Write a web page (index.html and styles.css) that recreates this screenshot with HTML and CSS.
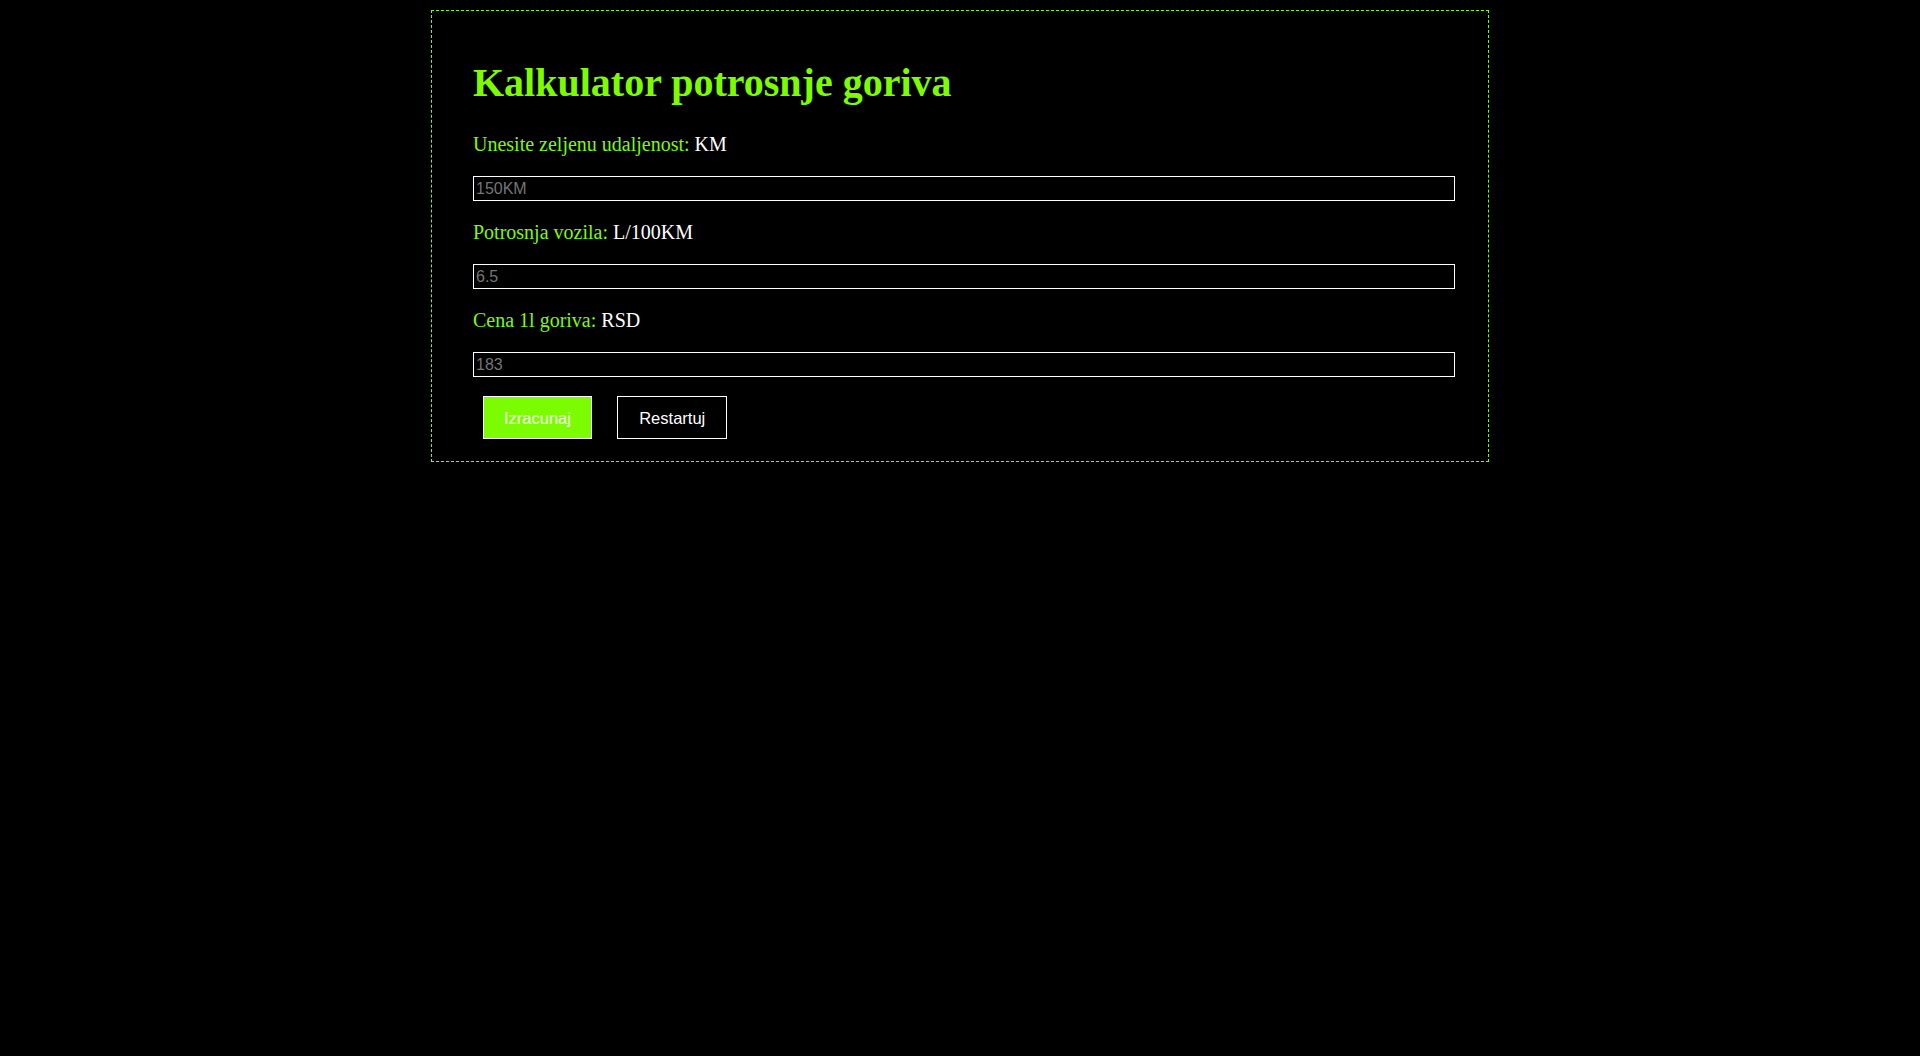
FILE: index.html
```html
<!DOCTYPE html>
<html lang="sr">
<head>
<meta charset="utf-8">
<title>Kalkulator potrosnje goriva</title>
<link rel="stylesheet" href="styles.css">
</head>
<body>
<div class="container">
  <h1 class="title">Kalkulator potrosnje goriva</h1>
  <p class="label">Unesite zeljenu udaljenost: <span class="unit">KM</span></p>
  <input class="field" type="text" placeholder="150KM">
  <p class="label">Potrosnja vozila: <span class="unit">L/100KM</span></p>
  <input class="field" type="text" placeholder="6.5">
  <p class="label">Cena 1l goriva: <span class="unit">RSD</span></p>
  <input class="field" type="text" placeholder="183">
  <div class="actions">
    <button class="btn btn-primary" type="button">Izracunaj</button>
    <button class="btn btn-secondary" type="button">Restartuj</button>
  </div>
</div>
</body>
</html>
```

FILE: styles.css
```css
html, body {
  background: #000;
}
body {
  margin: 0;
  padding-top: 10px;
  font-family: "Liberation Serif", "Times New Roman", serif;
}
.container {
  width: 976px;
  margin: 0 auto;
  padding: 21px 39px 12px 41px;
  border: 1px dashed #7CFC00;
}
.title {
  font-size: 40px;
  font-weight: bold;
  color: #7CFC00;
  margin: 27px 0 27px;
}
.label {
  font-size: 20px;
  color: #7CFC00;
  margin: 20px 0 20px;
}
.field {
  display: block;
  width: 100%;
  box-sizing: content-box;
  margin: 0 0 1px;
  padding: 2px 2px;
  height: 19px;
  border: 1px solid #fff;
  background: #000;
  color: #fff;
  font-family: "Liberation Sans", Arial, sans-serif;
  font-size: 16px;
  outline: none;
}
.unit {
  color: #fff;
}
.field::placeholder {
  color: #757575;
}
.actions {
  margin-top: 9px;
  font-size: 21px;
}
.btn {
  margin: 10px;
  padding: 12px 20px 11px;
  font-family: "Liberation Sans", Arial, sans-serif;
  font-size: 16.5px;
  line-height: 18px;
  border: 1px solid #fff;
  color: #fff;
  cursor: pointer;
  vertical-align: top;
}
.btn-primary {
  background: #7CFC00;
  color: #f4fff0;
}
.btn-secondary {
  background: #000;
  padding-left: 21px;
  padding-right: 21px;
}
```
